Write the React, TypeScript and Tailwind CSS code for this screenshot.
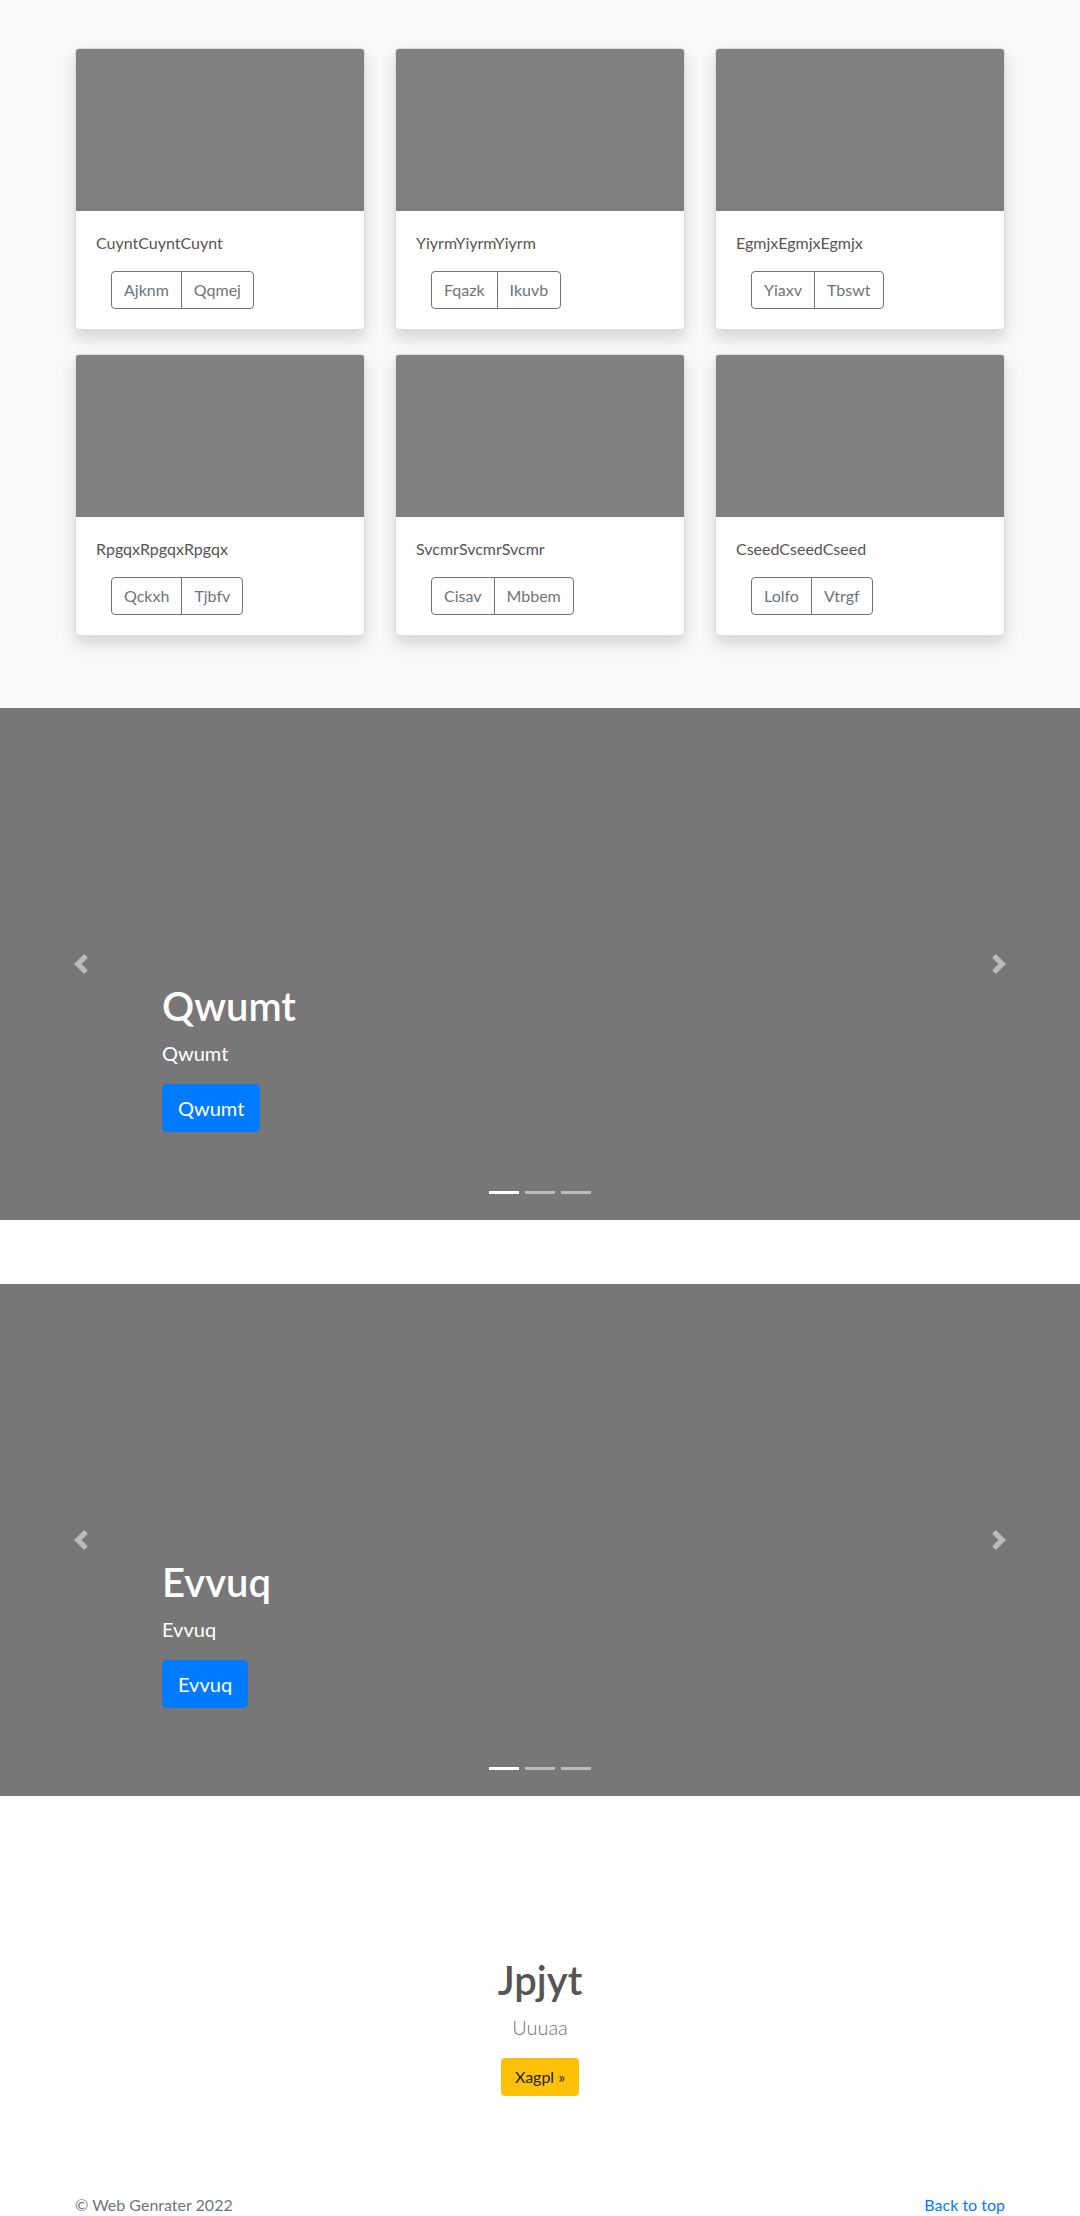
import React from "react";

const font = { fontFamily: '"Segoe UI", Lato, "Noto Sans", "Liberation Sans", sans-serif' };

const cards = [
  { title: "CuyntCuyntCuynt", a: "Ajknm", b: "Qqmej" },
  { title: "YiyrmYiyrmYiyrm", a: "Fqazk", b: "Ikuvb" },
  { title: "EgmjxEgmjxEgmjx", a: "Yiaxv", b: "Tbswt" },
  { title: "RpgqxRpgqxRpgqx", a: "Qckxh", b: "Tjbfv" },
  { title: "SvcmrSvcmrSvcmr", a: "Cisav", b: "Mbbem" },
  { title: "CseedCseedCseed", a: "Lolfo", b: "Vtrgf" },
];

function Card({ title, a, b }: { title: string; a: string; b: string }) {
  return (
    <div className="mb-6 flex flex-col overflow-hidden rounded border border-[rgba(0,0,0,0.125)] bg-white shadow-[0_8px_16px_rgba(0,0,0,0.15)]">
      <div className="h-[162px] bg-[#808080]" />
      <div className="p-5">
        <p className="mb-4 text-[16px] leading-6 text-[#555]">{title}</p>
        <div className="ml-[15px] flex">
          <button className="rounded-l border border-[#6c757d] px-3 py-[6px] text-[16px] leading-6 text-[#6c757d]">
            {a}
          </button>
          <button className="-ml-px rounded-r border border-[#6c757d] px-3 py-[6px] text-[16px] leading-6 text-[#6c757d]">
            {b}
          </button>
        </div>
      </div>
    </div>
  );
}

function Chevron({ dir }: { dir: "left" | "right" }) {
  return (
    <svg width="20" height="20" viewBox="0 0 8 8" fill="rgba(255,255,255,0.5)">
      {dir === "left" ? (
        <path d="M5.25 0l-4 4 4 4 1.5-1.5L4.25 4l2.5-2.5L5.25 0z" />
      ) : (
        <path d="M2.75 0l-1.5 1.5L3.75 4l-2.5 2.5L2.75 8l4-4-4-4z" />
      )}
    </svg>
  );
}

function Carousel({ label }: { label: string }) {
  return (
    <section className="relative mb-16 flex h-[512px] flex-col justify-end bg-[#777] pb-[88px] pl-[162px] text-white">
      <div className="absolute left-0 top-0 flex h-full w-[162px] items-center justify-center">
        <Chevron dir="left" />
      </div>
      <div className="absolute right-0 top-0 flex h-full w-[162px] items-center justify-center">
        <Chevron dir="right" />
      </div>
      <h1 className="mb-2 text-[40px] font-semibold leading-[48px]">{label}</h1>
      <p className="mb-4 text-[20px] leading-[30px]">{label}</p>
      <div className="flex">
        <button className="h-[48px] rounded-[5px] bg-[#007bff] px-4 text-[20px] leading-[30px] text-white">
          {label}
        </button>
      </div>
      <div className="absolute bottom-[26px] left-0 flex w-full justify-center gap-[6px]">
        <span className="h-[3px] w-[30px] bg-white" />
        <span className="h-[3px] w-[30px] bg-white/50" />
        <span className="h-[3px] w-[30px] bg-white/50" />
      </div>
    </section>
  );
}

export default function App() {
  return (
    <div className="w-[1080px] bg-white" style={font}>
      <section className="bg-[#f8f9fa] pb-12 pt-12">
        <div className="mx-auto grid w-[930px] grid-cols-3 gap-x-[30px]">
          {cards.map((c) => (
            <Card key={c.title} {...c} />
          ))}
        </div>
      </section>
      <Carousel label="Qwumt" />
      <Carousel label="Evvuq" />
      <section className="flex flex-col items-center pb-[49px] pt-[96px]">
        <h1 className="mb-2 text-[40px] font-semibold leading-[48px] text-[#555]">Jpjyt</h1>
        <p className="mb-4 text-[20px] font-light leading-[30px] text-[#6c757d]">Uuuaa</p>
        <button className="rounded bg-[#ffc107] px-[14px] py-[7px] text-[16px] leading-6 text-[#212529]">
          Xagpl »
        </button>
      </section>
      <footer className="mx-auto flex w-[930px] justify-between pb-12 pt-12 text-[16px] leading-6">
        <p className="text-[#6c757d]">© Web Genrater 2022</p>
        <a href="#" className="text-[#007bff]">
          Back to top
        </a>
      </footer>
    </div>
  );
}
